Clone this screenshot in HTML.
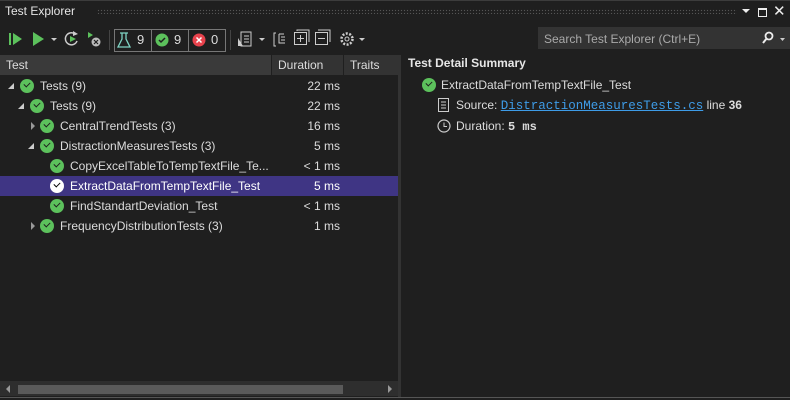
<!DOCTYPE html>
<html><head><meta charset="utf-8"><style>
*{margin:0;padding:0;box-sizing:border-box}
body{width:790px;height:400px;background:#1f1f1f;font-family:"Liberation Sans",sans-serif;font-size:12px;color:#dcdcdc;position:relative;overflow:hidden}
.a{position:absolute}
.title{left:0;top:0;width:790px;height:22px;background:#1f1f1f;border-top:1px solid #3c3c3c}
.dots{left:97px;top:9px;width:640px;height:5px;background-image:radial-gradient(#555 0.7px,transparent 0.8px);background-size:3px 3px}
.hdr{top:55px;height:20px;background:#333;color:#ddd;line-height:20px;padding-left:6px}
.row{left:0;width:400px;height:20px;line-height:20px;white-space:nowrap}
.row .t{position:absolute;top:0}
.row .d{position:absolute;right:60px;top:0}
.chk{position:absolute;top:3px;width:14px;height:14px;border-radius:50%;background:#5cc15c}
.chk:after{content:"";position:absolute;left:4px;top:3px;width:5px;height:3px;border-left:1.6px solid #1f1f1f;border-bottom:1.6px solid #1f1f1f;transform:rotate(-45deg)}
.sel .chk{background:#fff}
.sel .chk:after{border-color:#000}
.tri{position:absolute;top:7px;width:0;height:0}
.open{border-left:6px solid transparent;border-bottom:6px solid #ccc}
.closed{border-top:4px solid transparent;border-bottom:4px solid transparent;border-left:4px solid #999;top:6px}
.mono{font-family:"Liberation Mono",monospace}
</style></head><body>
<div class="a title"></div>
<div class="a" style="left:5px;top:4px;font-size:12px;color:#e6e6e6">Test Explorer</div>
<div class="a dots"></div>
<div class="a" style="left:742px;top:9px;border-left:4px solid transparent;border-right:4px solid transparent;border-top:4px solid #eee"></div>
<div class="a" style="left:758px;top:8px;width:9px;height:9px;border:1.5px solid #eee;border-top-width:2.5px"></div>
<div class="a" style="left:773px;top:2px;font-size:15px;color:#eee">✕</div>

<!-- toolbar -->
<svg class="a" style="left:0;top:26px" width="540" height="28">
<g fill="#5cc15c"><rect x="9" y="7" width="2" height="12"/><path d="M13 7 L22 13 L13 19Z"/>
<path d="M33 6 L44 13 L33 20Z"/></g>
<path d="M51 12 L57 12 L54 15Z" fill="#ccc"/>
<path d="M75 8 A6 6 0 1 0 77 15" stroke="#ccc" stroke-width="1.5" fill="none"/><path d="M73 5 L78 8 L73 10Z" fill="#ccc"/><path d="M70 10 L76 13 L70 16Z" fill="#5cc15c"/>
<path d="M88 6 L93 9 L88 12Z" fill="#5cc15c"/><circle cx="96" cy="16" r="4.5" fill="#bbb"/><path d="M94 14 L98 18 M98 14 L94 18" stroke="#1f1f1f" stroke-width="1.2"/>
<rect x="109" y="4" width="1" height="20" fill="#444"/>
<rect x="114.5" y="3.5" width="37" height="22" fill="none" stroke="#777"/>
<rect x="151.5" y="3.5" width="37" height="22" fill="none" stroke="#777"/>
<rect x="188.5" y="3.5" width="37" height="22" fill="none" stroke="#777"/>
<path d="M122 7 L122 13 L118 21 L130 21 L126 13 L126 7 M120 7 L128 7" stroke="#7fd4c4" stroke-width="1.3" fill="none"/>
<circle cx="162" cy="14" r="6.5" fill="#5cc15c"/><path d="M159 14 L161 16 L165 12" stroke="#1f1f1f" stroke-width="1.5" fill="none"/>
<circle cx="199" cy="14" r="6.5" fill="#e8424c"/><path d="M196.5 11.5 L201.5 16.5 M201.5 11.5 L196.5 16.5" stroke="#fff" stroke-width="1.5"/>
<rect x="230" y="4" width="1" height="20" fill="#444"/>
<rect x="241" y="6" width="10" height="14" fill="none" stroke="#ccc"/><path d="M244 10h5M244 13h5M244 16h5" stroke="#ccc"/><path d="M238 12 L238 20 L243 20Z" fill="#ccc"/>
<path d="M259 12 L265 12 L262 15Z" fill="#ccc"/>
<path d="M276 7 L274 7 L274 20 L276 20 M279 8h5M281 11h4M281 14h4M281 17h4 M279 8 L279 17 L281 17" stroke="#ccc" fill="none"/>
<rect x="294.5" y="6.5" width="12" height="12" fill="none" stroke="#ccc"/><path d="M297 5 L297 4 L309 4 L309 16" stroke="#ccc" fill="none"/><path d="M300.5 9v7M297 12.5h7" stroke="#ccc"/>
<rect x="315.5" y="6.5" width="12" height="12" fill="none" stroke="#ccc"/><path d="M318 4h12v12" stroke="#ccc" fill="none"/><path d="M318 12.5h7" stroke="#ccc"/>
<circle cx="347" cy="13" r="5.5" fill="none" stroke="#ccc" stroke-width="2.5" stroke-dasharray="2 1.5"/><circle cx="347" cy="13" r="2" fill="none" stroke="#ccc"/>
<path d="M359 12 L365 12 L362 15Z" fill="#ccc"/>
</svg>
<div class="a" style="left:137px;top:32px;font-size:13px">9</div>
<div class="a" style="left:174px;top:32px;font-size:13px">9</div>
<div class="a" style="left:211px;top:32px;font-size:13px">0</div>
<div class="a" style="left:538px;top:27px;width:252px;height:22px;background:#333"></div>
<div class="a" style="left:544px;top:32px;color:#aaa">Search Test Explorer (Ctrl+E)</div>
<svg class="a" style="left:760px;top:30px" width="30" height="16"><circle cx="9" cy="6" r="3.5" fill="none" stroke="#eee" stroke-width="1.8"/><path d="M7 8 L3 13" stroke="#eee" stroke-width="2"/><path d="M20 8 L25 8 L22.5 11Z" fill="#ccc"/></svg>

<!-- left pane -->
<div class="a hdr" style="left:0;width:271px;background:#3a3a3a">Test</div>
<div class="a hdr" style="left:272px;width:71px">Duration</div>
<div class="a hdr" style="left:344px;width:56px">Traits</div>

<div class="a row" style="top:76px"><span class="tri open" style="left:8px"></span><span class="chk" style="left:20px"></span><span class="t" style="left:40px">Tests (9)</span><span class="d">22 ms</span></div>
<div class="a row" style="top:96px"><span class="tri open" style="left:18px"></span><span class="chk" style="left:30px"></span><span class="t" style="left:50px">Tests (9)</span><span class="d">22 ms</span></div>
<div class="a row" style="top:116px"><span class="tri closed" style="left:31px"></span><span class="chk" style="left:40px"></span><span class="t" style="left:60px">CentralTrendTests (3)</span><span class="d">16 ms</span></div>
<div class="a row" style="top:136px"><span class="tri open" style="left:28px"></span><span class="chk" style="left:40px"></span><span class="t" style="left:60px">DistractionMeasuresTests (3)</span><span class="d">5 ms</span></div>
<div class="a row" style="top:156px"><span class="chk" style="left:50px"></span><span class="t" style="left:70px">CopyExcelTableToTempTextFile_Te...</span><span class="d">&lt; 1 ms</span></div>
<div class="a row sel" style="top:176px;background:#3f3584;color:#fff"><span class="chk" style="left:50px"></span><span class="t" style="left:70px">ExtractDataFromTempTextFile_Test</span><span class="d">5 ms</span></div>
<div class="a row" style="top:196px"><span class="chk" style="left:50px"></span><span class="t" style="left:70px">FindStandartDeviation_Test</span><span class="d">&lt; 1 ms</span></div>
<div class="a row" style="top:216px"><span class="tri closed" style="left:31px"></span><span class="chk" style="left:40px"></span><span class="t" style="left:60px">FrequencyDistributionTests (3)</span><span class="d">1 ms</span></div>

<div class="a" style="left:0;top:381px;width:398px;height:15px;background:#2e2e2e"></div>
<div class="a" style="left:18px;top:385px;width:325px;height:9px;background:#5a5a5a"></div>
<div class="a" style="left:6px;top:385px;border-top:4px solid transparent;border-bottom:4px solid transparent;border-right:4px solid #999"></div>
<div class="a" style="left:388px;top:385px;border-top:4px solid transparent;border-bottom:4px solid transparent;border-left:4px solid #999"></div>
<div class="a" style="left:398px;top:55px;width:3px;height:343px;background:#333"></div>
<div class="a" style="left:0;top:397px;width:790px;height:1px;background:#555"></div>

<!-- right pane -->
<div class="a" style="left:408px;top:56px;font-weight:bold;color:#e6e6e6">Test Detail Summary</div>
<span class="a chk" style="left:422px;top:78px"></span>
<div class="a" style="left:441px;top:78px">ExtractDataFromTempTextFile_Test</div>
<svg class="a" style="left:437px;top:98px" width="14" height="14"><rect x="1.5" y="0.5" width="10" height="13" fill="none" stroke="#ccc"/><path d="M4 4h5M4 7h5M4 10h5" stroke="#ccc"/></svg>
<div class="a" style="left:456px;top:98px">Source: <span class="mono" style="color:#3e9ce8;text-decoration:underline;font-size:12.5px">DistractionMeasuresTests.cs</span> line <b>36</b></div>
<svg class="a" style="left:437px;top:119px" width="14" height="14"><circle cx="7" cy="7" r="6" fill="none" stroke="#ccc" stroke-width="1.2"/><path d="M7 3.5 L7 7.5 L10 7.5" stroke="#ccc" fill="none"/></svg>
<div class="a" style="left:456px;top:119px">Duration: <span class="mono" style="font-weight:bold">5 ms</span></div>
</body></html>
